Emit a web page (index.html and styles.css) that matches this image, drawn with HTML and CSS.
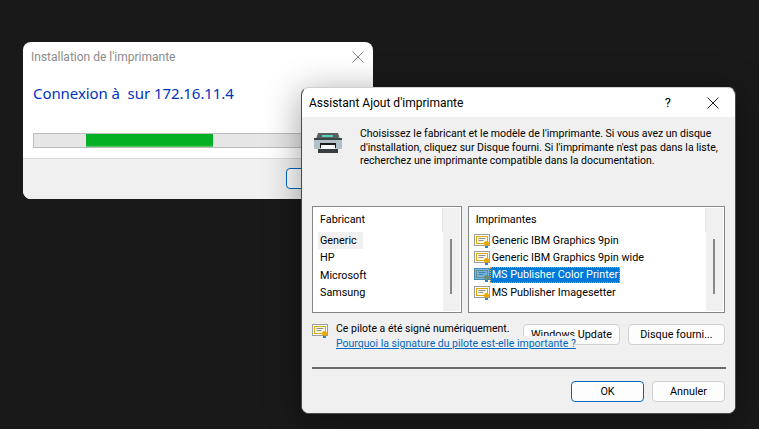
FILE: index.html
```html
<!DOCTYPE html>
<html lang="fr">
<head>
<meta charset="utf-8">
<title>Assistant Ajout d'imprimante</title>
<link rel="stylesheet" href="styles.css">
</head>
<body>
<svg class="defs" width="0" height="0" aria-hidden="true">
  <symbol id="cert" viewBox="0 0 16 14">
    <rect x="0.5" y="0.5" width="15" height="11" fill="#fff" stroke="#9c9c9c"/>
    <rect x="2.5" y="2.5" width="11" height="7" fill="#fffbe6" stroke="#e3a90c"/>
    <path d="M4.5 4.5h7M4.5 6.5h5" stroke="#8f8f8f" fill="none"/>
    <path d="M11 11h3v3h-3z" fill="#2f7fd6"/>
    <circle cx="12.5" cy="9.5" r="2.5" fill="#e8a800"/>
  </symbol>
</svg>

<section class="window back">
  <header class="title back-title">
    <span>Installation de l'imprimante</span>
    <svg class="x" width="12" height="12" viewBox="0 0 12 12"><path d="M.5.5l11 11M11.5.5l-11 11" stroke="#8a8a8a" fill="none"/></svg>
  </header>
  <div class="back-body">
    <p class="connect">Connexion à&nbsp; sur 172.16.11.4</p>
    <div class="progress"><div class="chunk"></div></div>
  </div>
  <footer class="back-foot"><button class="btn default back-btn">Annuler</button></footer>
</section>

<section class="window front">
  <header class="title front-title">
    <span class="title-text">Assistant Ajout d'imprimante</span>
    <span class="help">?</span>
    <svg class="x" width="12" height="12" viewBox="0 0 12 12"><path d="M.5.5l11 11M11.5.5l-11 11" stroke="#222" fill="none"/></svg>
  </header>
  <div class="front-body">
    <div class="intro">
      <svg class="printer" width="28" height="20" viewBox="0 0 28 20">
        <path d="M4 0h20l2 6H2z" fill="#5a5f63"/>
        <rect x="8" y="2" width="11" height="2" fill="#4fd6b4"/>
        <rect x="0" y="5" width="28" height="11" rx="1" fill="#b4c0c8"/>
        <rect x="0" y="5" width="28" height="2" fill="#3e4347"/>
        <rect x="24" y="4" width="1" height="1" fill="#3fd06a"/>
        <rect x="6" y="10" width="16" height="5" fill="#1c1c1c"/>
        <rect x="7" y="12" width="14" height="4" fill="#f7f7f7"/>
        <rect x="4" y="16" width="20" height="4" fill="#3a3d40"/>
      </svg>
      <p class="intro-text">Choisissez le fabricant et le modèle de l'imprimante. Si vous avez un disque d'installation, cliquez sur Disque fourni. Si l'imprimante n'est pas dans la liste, recherchez une imprimante compatible dans la documentation.</p>
    </div>

    <div class="lists">
      <div class="list">
        <div class="list-main">
          <div class="list-head">Fabricant</div>
          <ul class="rows">
            <li class="row"><span class="mfr hover">Generic</span></li>
            <li class="row"><span class="mfr">HP</span></li>
            <li class="row"><span class="mfr">Microsoft</span></li>
            <li class="row"><span class="mfr">Samsung</span></li>
          </ul>
        </div>
        <div class="scroll"><div class="thumb"></div></div>
      </div>
      <div class="list">
        <div class="list-main">
          <div class="list-head">Imprimantes</div>
          <ul class="rows">
            <li class="row"><svg class="cert"><use href="#cert"/></svg><span class="prn">Generic IBM Graphics 9pin</span></li>
            <li class="row"><svg class="cert"><use href="#cert"/></svg><span class="prn">Generic IBM Graphics 9pin wide</span></li>
            <li class="row"><span class="cert-sel"><svg class="cert"><use href="#cert"/></svg></span><span class="prn sel">MS Publisher Color Printer</span></li>
            <li class="row"><svg class="cert"><use href="#cert"/></svg><span class="prn">MS Publisher Imagesetter</span></li>
          </ul>
        </div>
        <div class="scroll"><div class="thumb"></div></div>
      </div>
    </div>

    <div class="sign">
      <svg class="cert sign-icon"><use href="#cert"/></svg>
      <div class="sign-text">
        <div class="signed">Ce pilote a été signé numériquement.</div>
        <a class="why" href="#">Pourquoi la signature du pilote est-elle importante ?</a>
      </div>
      <div class="sign-btns">
        <button class="btn wide">Windows Update</button>
        <button class="btn wide">Disque fourni...</button>
      </div>
    </div>

    <div class="sep"></div>

    <div class="actions">
      <button class="btn wide default">OK</button>
      <button class="btn wide">Annuler</button>
    </div>
  </div>
</section>
</body>
</html>
```
FILE: styles.css
```css
* { box-sizing: border-box; }
html, body { margin: 0; height: 100%; }
body {
  background: #191919;
  font-family: Roboto, "Noto Sans", sans-serif;
  font-size: 10.8px;
  color: #000;
  overflow: hidden;
  position: relative;
}
.defs { position: absolute; }
p { margin: 0; }

.window {
  position: absolute;
  border-radius: 8px;
  background: #fff;
  overflow: hidden;
  display: flex;
  flex-direction: column;
}
.back { left: 23px; top: 42px; width: 350px; height: 157px; }
.front {
  left: 301px; top: 87px; width: 435px; height: 327px;
  border: 1px solid #4a4a4a;
  border-top-color: #d0d0d0;
  box-shadow: 0 6px 36px rgba(0, 0, 0, .38);
}

.title { display: flex; align-items: center; flex: none; }
.back-title { height: 30px; padding: 0 9px 0 8px; justify-content: space-between; color: #8a8a8a; font-size: 12px; }
.front-title { height: 29px; padding: 0 16px 0 7px; font-size: 12px; }
.title-text { flex: 1; }
.help { margin-right: 36px; font-size: 13px; }

.back-body { flex: 1; padding: 11px 10px 0; }
.connect { color: #0033bc; font-family: "Noto Sans", sans-serif; font-size: 15px; line-height: 20px; letter-spacing: -.07px; }
.progress {
  margin-top: 30px;
  width: 320px; height: 15px;
  background: #e6e6e6;
  border: 1px solid #bcbcbc;
  padding-left: 52px;
}
.chunk { width: 127px; height: 13px; background: linear-gradient(#06b025 85%, #5cc870); }
.back-foot {
  height: 41px; flex: none;
  background: #f0f0f0;
  border-top: 1px solid #dcdcdc;
  padding: 9px 0 0 263px;
}
.back-btn { width: 73px; }

.front-body {
  flex: 1;
  background: #f0f0f0;
  padding: 8px 10px 0;
  display: flex;
  flex-direction: column;
}
.intro { display: flex; height: 81px; }
.printer { margin: 8px 18px 0 2px; flex: none; }
.intro-text { width: 362px; line-height: 13.5px; padding-top: 2px; font-size: 10.5px; }

.lists { display: flex; gap: 6px; height: 107px; }
.list {
  border: 1px solid #82878c;
  background: #fff;
  display: flex;
  padding: 1px 0 1px 1px;
}
.list:first-child { width: 150px; }
.list:last-child { width: 258px; }
.list-main { flex: 1; min-width: 0; }
.list-head { height: 24px; line-height: 23px; padding-left: 6px; border-right: 1px solid #e6e6e6; }
.rows { list-style: none; margin: 0; padding: 0; }
.row { height: 17.3px; display: flex; align-items: center; padding-left: 4px; white-space: nowrap; }
.mfr { padding: 0 2px; line-height: 17px; }
.hover { background: #f0f0f0; width: 45px; }
.cert { width: 16px; height: 14px; flex: none; display: block; }
.cert-sel { display: block; height: 14px; flex: none; position: relative; }
.cert-sel::after { content: ""; position: absolute; left: 0; top: 0; width: 16px; height: 12px; background: rgba(0, 120, 215, .55); }
.prn { padding: 0 2px; line-height: 16px; }
.sel { background: #0078d7; color: #fff; outline: 1px dotted #e8a33d; outline-offset: -1px; width: 130px; }
.scroll {
  width: 17px; flex: none;
  margin-right: 1px;
  background: #f0f0f0;
  padding: 31px 0 0 7px;
}
.thumb { width: 2px; height: 55px; background: #888; }

.sign { display: flex; margin-top: 8px; height: 46px; align-items: flex-start; }
.sign-icon { margin-top: 3px; flex: none; }
.sign-text { position: relative; z-index: 1; margin-left: 8px; width: 239px; flex: none; font-size: 10.5px; }
.signed { height: 15px; line-height: 16px; white-space: nowrap; }
.why { display: block; background: #f0f0f0; color: #0067c0; text-decoration: underline; line-height: 15px; height: 15px; white-space: nowrap; }
.sign-btns { display: flex; gap: 8px; margin: 3px 0 0 -52px; }
.btn {
  font: inherit;
  font-size: 10.8px;
  height: 21px;
  padding: 0;
  background: #fdfdfd;
  border: 1px solid #d0d0d0;
  border-radius: 4px;
  color: #000;
}
.wide { width: 97px; }
.default { border-color: #0067c0; }
.sep { height: 2px; background: #6b6b6b; flex: none; width: 414px; }
.actions { display: flex; gap: 8px; justify-content: flex-end; margin-top: 12px; padding-right: 0; }
.actions .btn { width: 73px; }
```
